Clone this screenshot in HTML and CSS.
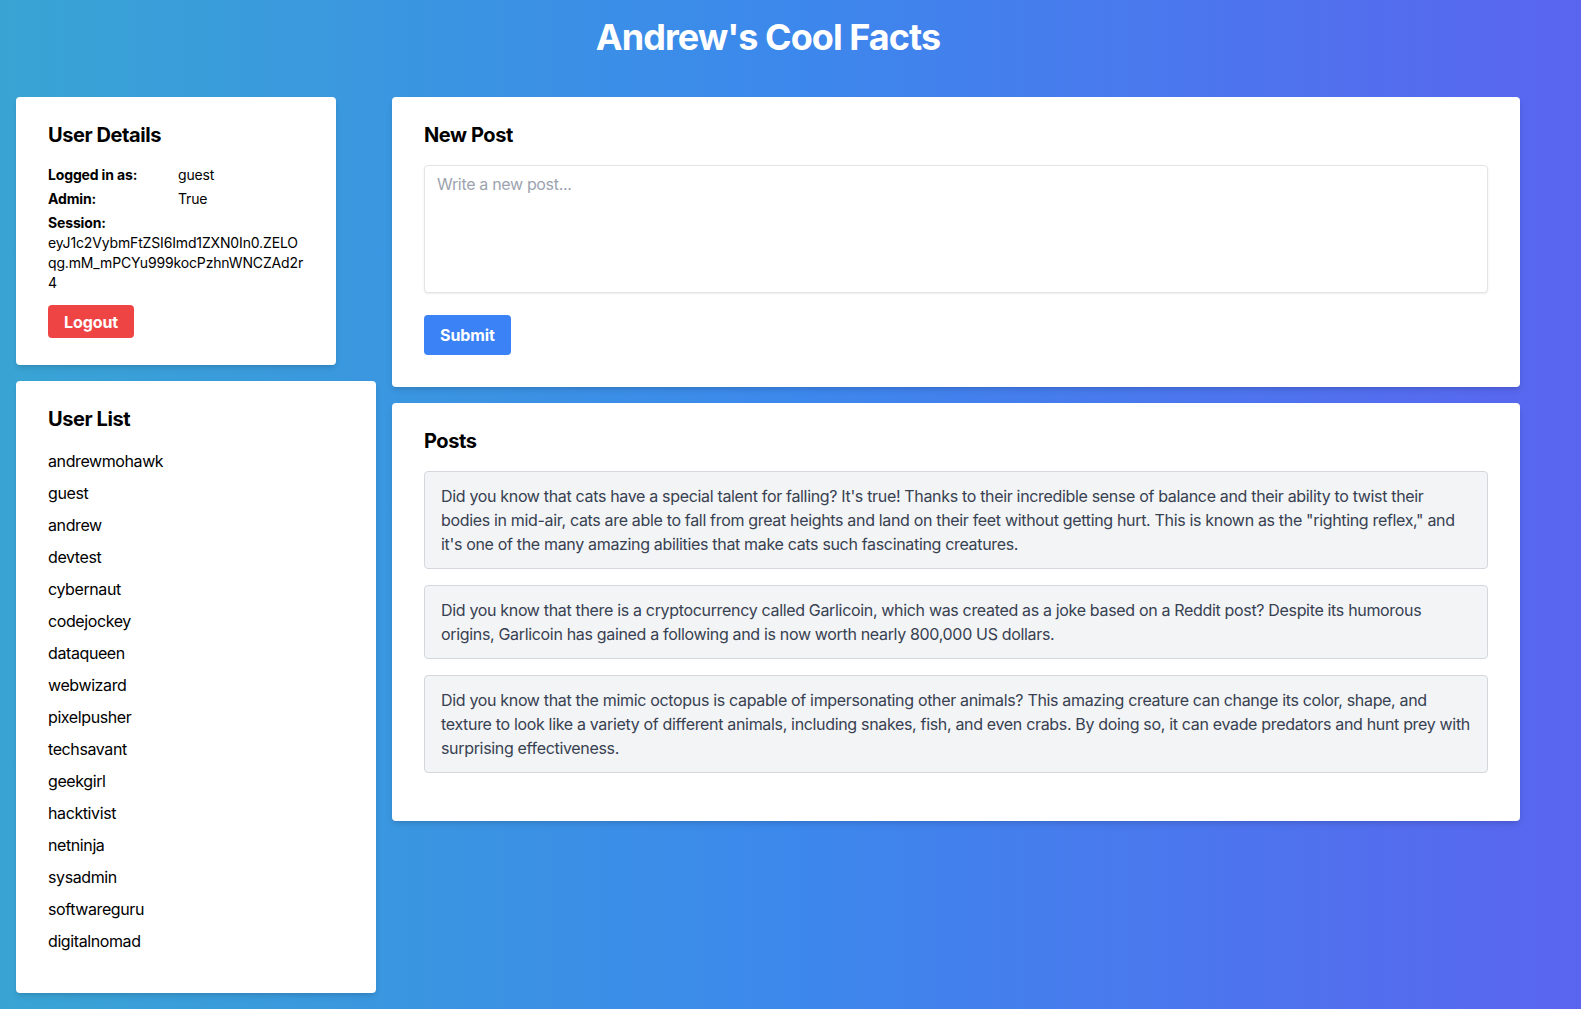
FILE: index.html
```html
<!DOCTYPE html>
<html lang="en">
<head>
<meta charset="utf-8">
<title>Andrew's Cool Facts</title>
<link rel="stylesheet" href="styles.css">
</head>
<body>
<div class="container">
  <h1 class="title">Andrew's Cool Facts</h1>
  <div class="layout">
    <aside class="sidebar">
      <section class="card details">
        <h2 class="card-title">User Details</h2>
        <div class="row"><span class="label">Logged in as:</span><span class="value">guest</span></div>
        <div class="row"><span class="label">Admin:</span><span class="value">True</span></div>
        <div class="session">
          <div class="label">Session:</div>
          <div class="token">eyJ1c2VybmFtZSI6Imd1ZXN0In0.ZELO<br>qg.mM_mPCYu999kocPzhnWNCZAd2r<br>4</div>
        </div>
        <button class="btn btn-red" type="button">Logout</button>
      </section>
      <section class="card users">
        <h2 class="card-title">User List</h2>
        <ul class="user-list">
          <li>andrewmohawk</li>
          <li>guest</li>
          <li>andrew</li>
          <li>devtest</li>
          <li>cybernaut</li>
          <li>codejockey</li>
          <li>dataqueen</li>
          <li>webwizard</li>
          <li>pixelpusher</li>
          <li>techsavant</li>
          <li>geekgirl</li>
          <li>hacktivist</li>
          <li>netninja</li>
          <li>sysadmin</li>
          <li>softwareguru</li>
          <li>digitalnomad</li>
        </ul>
      </section>
    </aside>
    <main class="main">
      <section class="card new-post">
        <h2 class="card-title">New Post</h2>
        <textarea class="post-input" placeholder="Write a new post..."></textarea>
        <button class="btn btn-blue" type="button">Submit</button>
      </section>
      <section class="card posts">
        <h2 class="card-title">Posts</h2>
        <div class="post-list">
          <div class="post">Did you know that cats have a special talent for falling? It's true! Thanks to their incredible sense of balance and their ability to twist their bodies in mid-air, cats are able to fall from great heights and land on their feet without getting hurt. This is known as the "righting reflex," and it's one of the many amazing abilities that make cats such fascinating creatures.</div>
          <div class="post">Did you know that there is a cryptocurrency called Garlicoin, which was created as a joke based on a Reddit post? Despite its humorous origins, Garlicoin has gained a following and is now worth nearly 800,000 US dollars.</div>
          <div class="post">Did you know that the mimic octopus is capable of impersonating other animals? This amazing creature can change its color, shape, and texture to look like a variety of different animals, including snakes, fish, and even crabs. By doing so, it can evade predators and hunt prey with surprising effectiveness.</div>
        </div>
      </section>
    </main>
  </div>
</div>
</body>
</html>
```
FILE: styles.css
```css
* { box-sizing: border-box; }

html, body {
  margin: 0;
  padding: 0;
}

body {
  min-height: 100vh;
  font-family: Inter, "Noto Sans", "Liberation Sans", sans-serif;
  letter-spacing: -0.33px;
  color: #000;
  background: linear-gradient(to right, #39a4d4 0%, #3c88ec 50%, #5a65ef 100%);
}

.container {
  width: 1536px;
  padding: 16px;
}

.title {
  margin: 0 0 40px;
  padding-top: 1px;
  text-align: center;
  color: #fff;
  font-size: 36px;
  line-height: 40px;
  font-weight: 700;
  letter-spacing: -0.97px;
}

.layout {
  display: flex;
  gap: 16px;
  align-items: flex-start;
}

.sidebar {
  width: 360px;
  flex: none;
  display: flex;
  flex-direction: column;
  align-items: flex-start;
  gap: 16px;
}

.main {
  flex: 1;
  display: flex;
  flex-direction: column;
  gap: 16px;
}

.card {
  background: #fff;
  border-radius: 4px;
  box-shadow: 0 4px 6px -1px rgba(0, 0, 0, 0.1), 0 2px 4px -2px rgba(0, 0, 0, 0.1);
  padding: 24px 32px;
}

.card-title {
  margin: 0 0 16px;
  font-size: 20px;
  line-height: 28px;
  font-weight: 700;
  letter-spacing: -0.42px;
}

.details {
  width: 320px;
  padding-bottom: 27px;
  font-size: 14px;
  line-height: 20px;
  letter-spacing: -0.15px;
}

.row {
  display: grid;
  grid-template-columns: 130px 1fr;
  margin-bottom: 4px;
}

.label {
  font-weight: 700;
}

.token {
  white-space: nowrap;
}

.btn {
  display: block;
  border: 0;
  border-radius: 4px;
  color: #fff;
  font-family: inherit;
  font-weight: 700;
  font-size: 16px;
  line-height: 24px;
  letter-spacing: -0.1px;
  padding: 0 16px;
  cursor: pointer;
}

.btn-red {
  margin-top: 12px;
  height: 33px;
  background: #ef4444;
}

.btn-blue {
  height: 40px;
  background: #3b82f6;
  padding: 8px 16px;
}

.users {
  width: 360px;
}

.user-list {
  list-style: none;
  margin: 0 0 16px;
  padding: 0;
  display: flex;
  flex-direction: column;
  gap: 8px;
  font-size: 16px;
  line-height: 24px;
  letter-spacing: -0.4px;
}

.new-post {
  padding-bottom: 32px;
}

.post-input {
  display: block;
  width: 100%;
  height: 128px;
  margin: 0 0 22px;
  padding: 6px 12px;
  border: 1px solid #e2e4e8;
  border-radius: 4px;
  box-shadow: 0 1px 2px rgba(0, 0, 0, 0.08);
  font-family: inherit;
  font-size: 16px;
  line-height: 24px;
  letter-spacing: -0.33px;
  resize: none;
  color: #111;
  background: #fff;
}

.post-input::placeholder {
  color: #9ca3af;
}

.posts {
  padding-bottom: 48px;
}

.post-list {
  display: flex;
  flex-direction: column;
  gap: 16px;
}

.post {
  background: #f3f4f6;
  border: 1px solid #d4d7dc;
  border-radius: 4px;
  padding: 12px 16px;
  color: #374151;
  font-size: 16px;
  line-height: 24px;
}
```
